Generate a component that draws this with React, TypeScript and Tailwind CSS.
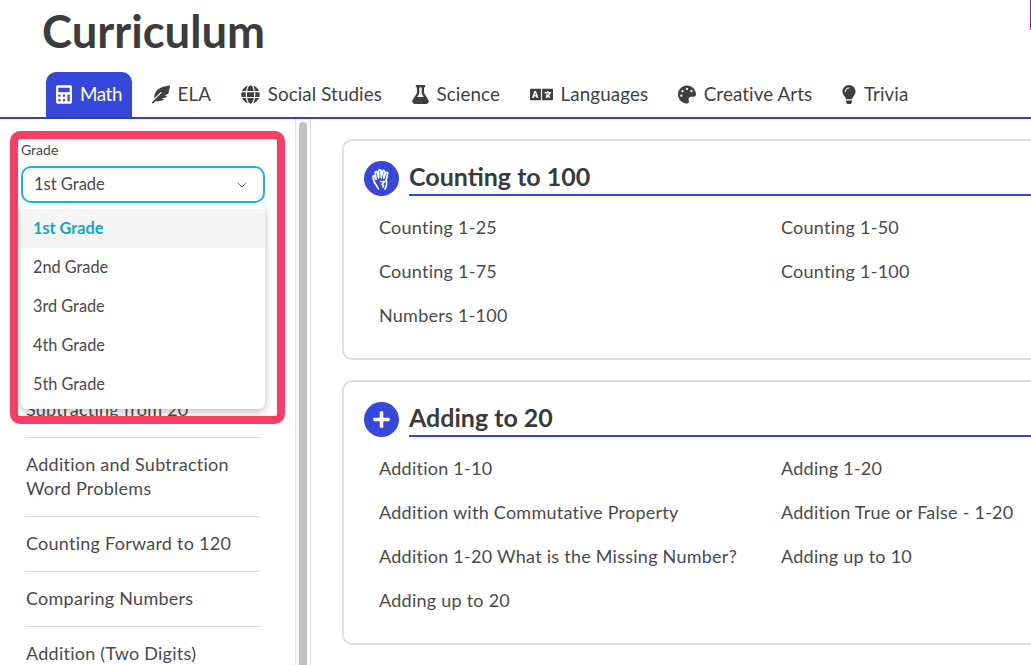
import { FaCalculator, FaFeatherAlt, FaFlask, FaGlobe, FaLanguage, FaLightbulb, FaPalette, FaPlus } from "react-icons/fa";
import { ChevronDown } from "lucide-react";
import type { ComponentType, ReactNode } from "react";

const tabs: { label: string; icon: ComponentType<{ className?: string }>; iconClass: string; active?: boolean }[] = [
  { label: "Math", icon: FaCalculator, iconClass: "w-[16px]", active: true },
  { label: "ELA", icon: FaFeatherAlt, iconClass: "w-[18px]" },
  { label: "Social Studies", icon: FaGlobe, iconClass: "w-[19px]" },
  { label: "Science", icon: FaFlask, iconClass: "w-[17px]" },
  { label: "Languages", icon: FaLanguage, iconClass: "w-[23px]" },
  { label: "Creative Arts", icon: FaPalette, iconClass: "w-[18px]" },
  { label: "Trivia", icon: FaLightbulb, iconClass: "w-[14px]" },
];

const topics = [
  "Subtracting from 20",
  "Addition and Subtraction Word Problems",
  "Counting Forward to 120",
  "Comparing Numbers",
  "Addition (Two Digits)",
];

const grades = ["1st Grade", "2nd Grade", "3rd Grade", "4th Grade", "5th Grade"];

function HandIcon() {
  return (
    <svg viewBox="0 0 24 24" className="h-[24px] w-[24px]" fill="none" stroke="white" strokeWidth="1.700" strokeLinecap="round" strokeLinejoin="round">
      <path d="M8.500 22C7.500 19.500 5.500 17.500 4 14.500L3 9.800C2.900 8.600 4.700 8.300 5 9.500L6 12.500 5.300 5.800C5.200 4.400 7.200 4.200 7.500 5.600L8.600 11 8.700 3.800C8.800 2.400 10.800 2.400 10.900 3.800L11.300 10.800 12.500 4.300C12.800 2.900 14.700 3.300 14.500 4.700L13.800 11 15.800 6C16.300 4.800 18 5.400 17.700 6.700L16 13.500C17 15.500 16.800 18.500 15 22" />
      <path d="M10.500 14.500H14.500L12 17.500C13.500 17.500 13.800 19 13 20" />
    </svg>
  );
}

function Card({ title, icon, links, className }: { title: string; icon: ReactNode; links: string[]; className?: string }) {
  return (
    <section className={`w-[800px] rounded-[10px] border-2 border-[#dedede] pl-[20px] pt-[20px] ${className ?? ""}`}>
      <div className="flex items-start">
        <span className="flex h-[35px] w-[35px] shrink-0 items-center justify-center rounded-full bg-[#3647db]">{icon}</span>
        <h2 className="ml-[10px] h-[35px] flex-1 border-b-2 border-[#3647db] text-[25px] font-bold leading-[31px] text-[#3a3a3a]">{title}</h2>
      </div>
      <div className="mt-[9px] grid grid-cols-[402px_1fr] pl-[15px]">
        {links.map((link) => (
          <a key={link} className="flex h-[44px] items-center text-[18px] tracking-[0.25px] text-[#4a4a4a]">
            {link}
          </a>
        ))}
      </div>
    </section>
  );
}

export default function App() {
  return (
    <div className="relative flex h-screen w-screen flex-col overflow-hidden bg-white font-['Lato','Noto_Sans',sans-serif] text-[#3f3f3f]">
      <div className="absolute right-0 top-0 h-[30px] w-px bg-[#8e2aa8]" />
      <h1 className="ml-[42px] mt-[6px] h-[66px] text-[45.400px] font-bold leading-[50px] text-[#3c3c3c]">Curriculum</h1>

      <nav className="flex h-[47px] shrink-0 border-b-2 border-[#3240c4] pl-[46px]">
        {tabs.map(({ label, icon: Icon, iconClass, active }) => (
          <div
            key={label}
            className={`mr-[9.600px] flex h-[45px] items-center gap-[8px] rounded-t-[10px] px-[10px] pb-[1px] text-[18.800px] ${active ? "bg-[#3647db] tracking-[-0.4px] text-white" : "tracking-[0.1px] text-[#3f3f3f]"}`}
          >
            <Icon className={`h-[19px] shrink-0 ${iconClass}`} />
            {label}
          </div>
        ))}
      </nav>

      <div className="flex min-h-0 flex-1">
        <aside className="relative w-[295px] shrink-0 overflow-hidden pl-[26px] pr-[35px]">
          <p className="ml-[-5px] mt-[22px] h-[17px] text-[14px] leading-[17px] text-[#4a4a4a]">Grade</p>
          <div className="ml-[-5px] mr-[-5px] mt-[8px] flex h-[37px] items-center justify-between rounded-[10px] border-2 border-[#12bccb] pl-[11px] pr-[13px] text-[16.500px] text-[#4a4a4a]">
            1st Grade
            <ChevronDown className="h-[16px] w-[16px] text-[#777777]" strokeWidth={1.5} />
          </div>
          <ul className="mt-[180px]">
            {topics.map((topic, i) => (
              <li key={topic} className={`pb-[16px] pt-[14px] text-[18px] leading-[24px] tracking-[0.25px] text-[#4a4a4a] ${i < topics.length - 1 ? "border-b border-[#d9d9d9]" : ""}`}>
                {topic}
              </li>
            ))}
          </ul>

          <div className="absolute left-[21px] top-[85px] w-[244px] overflow-hidden rounded-[6px] bg-white py-[5px] shadow-[0_3px_8px_rgba(0,0,0,0.25)]">
            {grades.map((grade, i) => (
              <div
                key={grade}
                className={`flex h-[39px] items-center pl-[12px] text-[16.300px] ${i === 0 ? "bg-[#f5f5f5] font-bold text-[#0fa9ba]" : "text-[#4a4a4a]"}`}
              >
                {grade}
              </div>
            ))}
          </div>
          <div className="pointer-events-none absolute left-[10px] top-[12px] h-[293px] w-[275px] rounded-[10px] border-[8px] border-[#fb3d66]" />
        </aside>

        <div className="w-[16px] shrink-0 border-x border-[#e2e2e2] bg-[#fafafa] pl-[3px] pt-[3px]">
          <div className="h-full w-[8px] rounded-t-[4px] bg-[#c1c1c1]" />
        </div>

        <main className="flex min-w-0 flex-1 flex-col gap-[20px] overflow-hidden pl-[31px] pt-[20px]">
          <Card
            title="Counting to 100"
            icon={<HandIcon />}
            className="h-[221px] shrink-0"
            links={["Counting 1-25", "Counting 1-50", "Counting 1-75", "Counting 1-100", "Numbers 1-100"]}
          />
          <Card
            title="Adding to 20"
            icon={<FaPlus className="h-[19px] w-[19px] text-white" />}
            className="h-[265px] shrink-0"
            links={[
              "Addition 1-10",
              "Adding 1-20",
              "Addition with Commutative Property",
              "Addition True or False - 1-20",
              "Addition 1-20 What is the Missing Number?",
              "Adding up to 10",
              "Adding up to 20",
            ]}
          />
        </main>
      </div>
    </div>
  );
}
